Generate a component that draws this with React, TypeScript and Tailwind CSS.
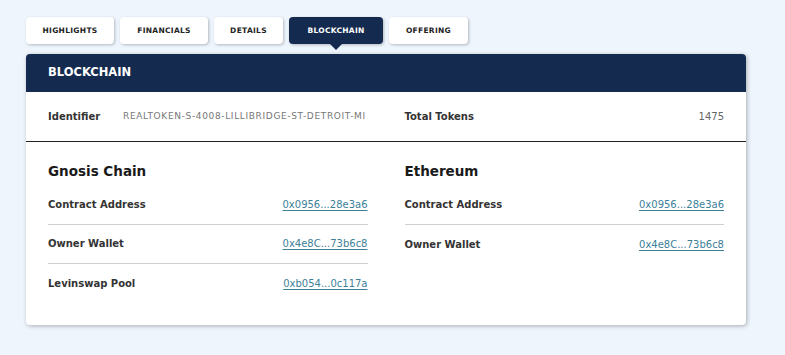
import React from 'react';

const TABS = ['HIGHLIGHTS', 'FINANCIALS', 'DETAILS', 'BLOCKCHAIN', 'OFFERING'];

const TAB_WIDTHS: Record<string, string> = {
  HIGHLIGHTS: 'w-[88px]',
  FINANCIALS: 'w-[88px]',
  DETAILS: 'w-[69px]',
  BLOCKCHAIN: 'w-[94px]',
  OFFERING: 'w-[79px]',
};

const GNOSIS = [
  { label: 'Contract Address', value: '0x0956...28e3a6' },
  { label: 'Owner Wallet', value: '0x4e8C...73b6c8' },
  { label: 'Levinswap Pool', value: '0xb054...0c117a' },
];

const ETHEREUM = [
  { label: 'Contract Address', value: '0x0956...28e3a6' },
  { label: 'Owner Wallet', value: '0x4e8C...73b6c8' },
];

function ChainColumn({ title, rows }: { title: string; rows: { label: string; value: string }[] }) {
  return (
    <div className="flex-1">
      <h3 className="text-[13.5px] font-semibold text-[#1a1a1a] leading-none mb-[7px]">{title}</h3>
      <div>
        {rows.map((r, i) => (
          <div
            key={r.label}
            className={`flex items-center justify-between h-[39px] ${i < rows.length - 1 ? 'border-b border-[#cfcfcf]' : ''}`}
          >
            <span className="text-[10px] font-semibold text-[#333]">{r.label}</span>
            <a href="#" className="text-[10px] text-[#3d7f98] underline underline-offset-2">
              {r.value}
            </a>
          </div>
        ))}
      </div>
    </div>
  );
}

export default function App() {
  return (
    <div className="min-h-[355px] w-full bg-[#eef5fd] pt-[17px] pl-[26px]" style={{ fontFamily: '"DejaVu Sans", sans-serif' }}>
      {/* tabs */}
      <div className="flex gap-[6px] items-start">
        {TABS.map((t) => {
          const active = t === 'BLOCKCHAIN';
          return (
            <div key={t} className={`relative ${TAB_WIDTHS[t]}`}>
              <div
                className={`h-[27px] rounded-[4px] flex items-center justify-center text-[7.5px] font-bold tracking-[0.3px] shadow-[1px_1px_3px_rgba(0,0,0,0.25)] ${
                  active ? 'bg-[#142b4f] text-white' : 'bg-white text-[#222]'
                }`}
              >
                {t}
              </div>
              {active && (
                <div className="absolute left-1/2 -translate-x-1/2 top-[27px] w-0 h-0 border-l-[6px] border-r-[6px] border-t-[6px] border-l-transparent border-r-transparent border-t-[#142b4f]" />
              )}
            </div>
          );
        })}
      </div>

      {/* card */}
      <div className="mt-[10px] w-[720px] bg-white rounded-[4px] shadow-[1px_1px_4px_rgba(0,0,0,0.3)] overflow-hidden">
        <div className="h-[38px] bg-[#142b4f] flex items-center px-[22px]">
          <span className="text-white text-[11.5px] font-bold">BLOCKCHAIN</span>
        </div>
        <div className="h-[50px] border-b border-[#222] flex items-center px-[22px] gap-[37px]">
          <div className="flex-1 flex items-center">
            <span className="text-[10px] font-semibold text-[#333] w-[75px]">Identifier</span>
            <span className="text-[9px] tracking-[0.65px] text-[#777]">REALTOKEN-S-4008-LILLIBRIDGE-ST-DETROIT-MI</span>
          </div>
          <div className="flex-1 flex items-center justify-between">
            <span className="text-[10px] font-semibold text-[#333]">Total Tokens</span>
            <span className="text-[10px] text-[#666]">1475</span>
          </div>
        </div>
        <div className="flex gap-[37px] px-[22px] pt-[23px] pb-[22px]">
          <ChainColumn title="Gnosis Chain" rows={GNOSIS} />
          <ChainColumn title="Ethereum" rows={ETHEREUM} />
        </div>
      </div>
    </div>
  );
}
